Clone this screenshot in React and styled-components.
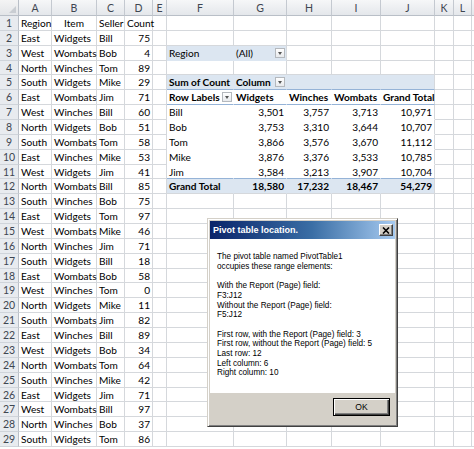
import React from 'react';
import styled, { createGlobalStyle } from 'styled-components';

const GlobalStyle = createGlobalStyle`
  html, body { margin: 0; padding: 0; background: #fff; overflow: hidden; }
  body { font-family: Lato, "Liberation Sans", sans-serif; }
`;

const COLS = [19, 33, 45, 28, 28, 14, 67, 53, 45, 49, 54, 19, 18, 30];
const LETTERS = ['A', 'B', 'C', 'D', 'E', 'F', 'G', 'H', 'I', 'J', 'K', 'L', 'M'];
const ROW_H = 14.86;
const ROW_HEIGHTS = Array.from({ length: 29 }, (_, i) => Math.round((i + 1) * ROW_H) - Math.round(i * ROW_H));

const GRID = '#D5D8DC';
const BAND = '#DCE6F1';
const BAND_LINE = '#95B3D7';

const DATA = [
  ['Region', 'Item', 'Seller', 'Count'],
  ['East', 'Widgets', 'Bill', 75],
  ['West', 'Wombats', 'Bob', 4],
  ['North', 'Winches', 'Tom', 89],
  ['South', 'Widgets', 'Mike', 29],
  ['East', 'Wombats', 'Jim', 71],
  ['West', 'Winches', 'Bill', 60],
  ['North', 'Widgets', 'Bob', 51],
  ['South', 'Wombats', 'Tom', 58],
  ['East', 'Winches', 'Mike', 53],
  ['West', 'Widgets', 'Jim', 41],
  ['North', 'Wombats', 'Bill', 85],
  ['South', 'Winches', 'Bob', 75],
  ['East', 'Widgets', 'Tom', 97],
  ['West', 'Wombats', 'Mike', 46],
  ['North', 'Winches', 'Jim', 71],
  ['South', 'Widgets', 'Bill', 18],
  ['East', 'Wombats', 'Bob', 58],
  ['West', 'Winches', 'Tom', 0],
  ['North', 'Widgets', 'Mike', 11],
  ['South', 'Wombats', 'Jim', 82],
  ['East', 'Winches', 'Bill', 89],
  ['West', 'Widgets', 'Bob', 34],
  ['North', 'Wombats', 'Tom', 64],
  ['South', 'Winches', 'Mike', 42],
  ['East', 'Widgets', 'Jim', 71],
  ['West', 'Wombats', 'Bill', 97],
  ['North', 'Winches', 'Bob', 37],
  ['South', 'Widgets', 'Tom', 86],
];

const PIVOT_ROWS = [
  ['Bill', '3,501', '3,757', '3,713', '10,971'],
  ['Bob', '3,753', '3,310', '3,644', '10,707'],
  ['Tom', '3,866', '3,576', '3,670', '11,112'],
  ['Mike', '3,876', '3,376', '3,533', '10,785'],
  ['Jim', '3,584', '3,213', '3,907', '10,704'],
];
const PIVOT_TOTAL = ['Grand Total', '18,580', '17,232', '18,467', '54,279'];
const PIVOT_HEAD = ['Row Labels', 'Widgets', 'Winches', 'Wombats', 'Grand Total'];

const Page = styled.div`
  position: relative;
  width: 474px;
  height: 449px;
  overflow: hidden;
  background: #fff;
`;

const Sheet = styled.div`
  display: grid;
  grid-template-columns: ${COLS.map((c) => c + 'px').join(' ')};
  grid-template-rows: 16px ${ROW_HEIGHTS.map((h) => h + 'px').join(' ')};
  font-family: Lato, "Liberation Sans", sans-serif;
  font-size: 10.1px;
  color: #000;
`;

const Corner = styled.div`
  box-sizing: border-box;
  position: relative;
  background: linear-gradient(#f4f4f4, #e3e5e8);
  border-right: 1px solid #b9bfc7;
  border-bottom: 1px solid #b9bfc7;
  &::after {
    content: '';
    position: absolute;
    right: 2px;
    bottom: 2px;
    border-left: 7px solid transparent;
    border-bottom: 7px solid #c9cdd2;
  }
`;

const ColHead = styled.div`
  box-sizing: border-box;
  background: linear-gradient(#f6f7f8, #e4e7eb);
  border-right: 1px solid #c4c9d0;
  border-bottom: 1px solid #b9bfc7;
  display: flex;
  align-items: center;
  justify-content: center;
  color: #3e4651;
  font-size: 10.5px;
  padding-top: 1px;
`;

const RowHead = styled.div`
  box-sizing: border-box;
  background: #e8ebef;
  border-right: 1px solid #b9bfc7;
  border-bottom: 1px solid #cfd4da;
  display: flex;
  align-items: center;
  justify-content: center;
  color: #3e4651;
  font-size: 10.5px;
`;

const Cell = styled.div`
  box-sizing: border-box;
  min-width: 0;
  background: ${(p) => p.$fill || 'transparent'};
  border-right: 1px solid ${(p) => p.$right || GRID};
  border-bottom: 1px solid ${(p) => p.$bottom || GRID};
  display: flex;
  align-items: center;
  justify-content: ${(p) => (p.$align === 'right' ? 'flex-end' : p.$align === 'center' ? 'center' : p.$btn ? 'space-between' : 'flex-start')};
  padding: 0 ${(p) => (p.$btn ? '1px' : '2px')} 0 2px;
  white-space: nowrap;
  font-weight: ${(p) => (p.$bold ? 700 : 400)};
`;

const DropBtn = styled.span`
  box-sizing: border-box;
  width: 10px;
  height: 10px;
  flex: none;
  border: 1px solid #b4b8bd;
  background: linear-gradient(#ffffff, #e8eaed);
  display: flex;
  align-items: center;
  justify-content: center;
  &::before {
    content: '';
    border-left: 2.5px solid transparent;
    border-right: 2.5px solid transparent;
    border-top: 3px solid #555;
  }
`;

/* Dialog */
const Dialog = styled.div`
  position: absolute;
  left: 207px;
  top: 218px;
  width: 191px;
  height: 209px;
  box-sizing: border-box;
  background: #d4d0c8;
  border: 1px solid;
  border-color: #d4d0c8 #404040 #404040 #d4d0c8;
  box-shadow: inset 1px 1px 0 #ffffff, inset -1px -1px 0 #808080;
  padding: 2px;
  display: flex;
  flex-direction: column;
  font-family: "Liberation Sans", Arial, sans-serif;
`;

const TitleBar = styled.div`
  height: 18px;
  flex: none;
  background: linear-gradient(90deg, #0a246a 0%, #3a6ea5 55%, #a6caf0 100%);
  display: flex;
  align-items: center;
  justify-content: space-between;
  padding: 0 2px 0 3px;
  color: #fff;
  font-weight: 700;
  font-size: 9px;
`;

const CloseBtn = styled.div`
  box-sizing: border-box;
  width: 14px;
  height: 12px;
  background: #d4d0c8;
  border: 1px solid;
  border-color: #ffffff #404040 #404040 #ffffff;
  box-shadow: inset -1px -1px 0 #808080;
  display: flex;
  align-items: center;
  justify-content: center;
`;

const Body = styled.div`
  flex: 1;
  background: #fff;
  padding: 13px 7px 0 7px;
  font-size: 8.2px;
  line-height: 9.7px;
  color: #000;
  display: flex;
  flex-direction: column;
  gap: 9.7px;
`;

const Para = styled.div`
  display: flex;
  flex-direction: column;
`;

const Footer = styled.div`
  height: 31px;
  flex: none;
  background: #d4d0c8;
  display: flex;
  justify-content: flex-end;
  align-items: flex-start;
  padding: 5px 5px 0 0;
  box-sizing: border-box;
`;

const OkButton = styled.div`
  box-sizing: border-box;
  width: 57px;
  height: 18px;
  border: 1px solid #000;
  background: #d4d0c8;
  box-shadow: inset 1px 1px 0 #ffffff, inset -1px -1px 0 #404040, inset -2px -2px 0 #808080;
  display: flex;
  align-items: center;
  justify-content: center;
  font-size: 8.6px;
  color: #000;
`;

function cellProps(r, c) {
  const col = LETTERS[c];
  if (c <= 3) {
    const v = DATA[r - 1][c];
    if (r === 1 && c === 1) return { text: v, align: 'center' };
    return { text: String(v), align: typeof v === 'number' ? 'right' : 'left' };
  }
  const pc = c - 5; // 0..4 for F..J
  if (r === 3 && (col === 'F' || col === 'G')) {
    return col === 'F'
      ? { text: 'Region', fill: BAND, right: BAND, bottom: BAND }
      : { text: '(All)', fill: BAND, bottom: BAND, btn: true };
  }
  if (pc >= 0 && pc <= 4) {
    const right = pc === 4 ? GRID : 'transparent';
    if (r === 5) {
      const texts = ['Sum of Count', 'Column', '', '', ''];
      return { text: texts[pc], bold: true, fill: BAND, right: pc === 4 ? GRID : BAND, bottom: BAND_LINE, btn: pc === 1 };
    }
    if (r === 6) {
      return { text: PIVOT_HEAD[pc], bold: true, right, bottom: BAND_LINE, btn: pc === 0 };
    }
    if (r >= 7 && r <= 11) {
      return {
        text: PIVOT_ROWS[r - 7][pc],
        align: pc === 0 ? 'left' : 'right',
        right,
        bottom: r === 11 ? BAND_LINE : 'transparent',
      };
    }
    if (r === 12) {
      return {
        text: PIVOT_TOTAL[pc],
        align: pc === 0 ? 'left' : 'right',
        bold: true,
        fill: BAND,
        right: pc === 4 ? GRID : BAND,
      };
    }
  }
  return { text: '' };
}

function CloseGlyph() {
  return (
    <svg width="8" height="7" viewBox="0 0 8 7">
      <path d="M1 0.5 L7 6.5 M7 0.5 L1 6.5" stroke="#000" strokeWidth="1.6" fill="none" />
    </svg>
  );
}

export default function App() {
  const cells = [];
  cells.push(<Corner key="corner" />);
  LETTERS.forEach((l) => cells.push(<ColHead key={'h' + l}>{l === 'M' ? '' : l}</ColHead>));
  for (let r = 1; r <= 29; r++) {
    cells.push(<RowHead key={'r' + r}>{r}</RowHead>);
    for (let c = 0; c < LETTERS.length; c++) {
      const p = cellProps(r, c);
      cells.push(
        <Cell
          key={r + '-' + c}
          $align={p.align}
          $bold={p.bold}
          $fill={p.fill}
          $right={p.right}
          $bottom={p.bottom}
          $btn={p.btn}
        >
          {p.btn ? <span>{p.text}</span> : p.text}
          {p.btn && <DropBtn />}
        </Cell>
      );
    }
  }

  return (
    <Page>
      <GlobalStyle />
      <Sheet>{cells}</Sheet>
      <Dialog>
        <TitleBar>
          <span>Pivot table location.</span>
          <CloseBtn>
            <CloseGlyph />
          </CloseBtn>
        </TitleBar>
        <Body>
          <Para>
            <div>The pivot table named PivotTable1</div>
            <div>occupies these range elements:</div>
          </Para>
          <Para>
            <div>With the Report (Page) field:</div>
            <div>F3:J12</div>
            <div>Without the Report (Page) field:</div>
            <div>F5:J12</div>
          </Para>
          <Para>
            <div>First row, with the Report (Page) field: 3</div>
            <div>First row, without the Report (Page) field: 5</div>
            <div>Last row: 12</div>
            <div>Left column: 6</div>
            <div>Right column: 10</div>
          </Para>
        </Body>
        <Footer>
          <OkButton>OK</OkButton>
        </Footer>
      </Dialog>
    </Page>
  );
}
